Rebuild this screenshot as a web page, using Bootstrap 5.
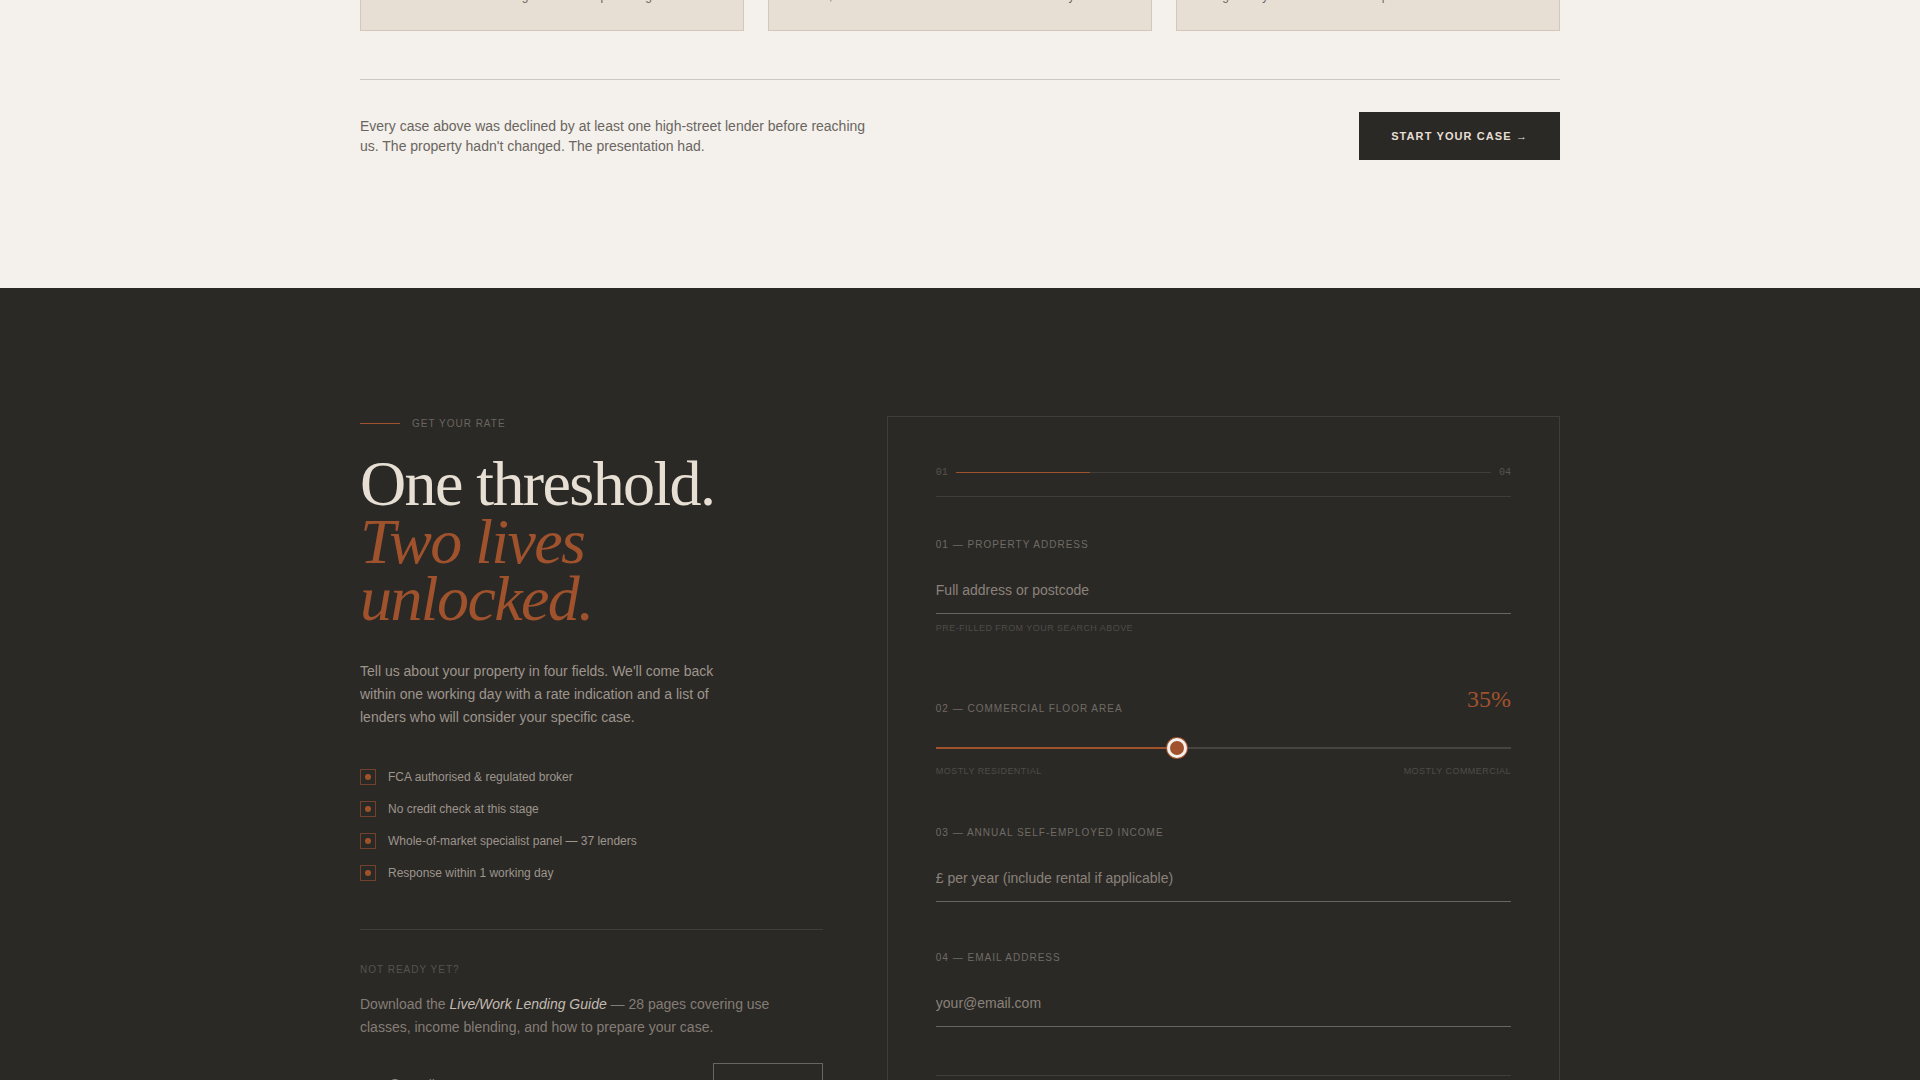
<!DOCTYPE html>
<html lang="en">
<head>
<meta charset="utf-8">
<meta name="viewport" content="width=device-width, initial-scale=1">
<title>Get your rate</title>
<link rel="stylesheet" href="https://cdn.jsdelivr.net/npm/bootstrap@5.3.0/dist/css/bootstrap.min.css">
<style>
:root { --ink: #2a2926; --paper: #f4f1ec; --sand: #e8dfd4; --rust: #a0522d; --stone: #6b655f; --mist: #9e958c; --line: #403e3a; }
body { font-family: "Liberation Sans", sans-serif; background: var(--ink); color: var(--stone); font-size: 14px; line-height: 20px; overflow-x: hidden; }
.page-wrap { max-width: 1200px; }
.cases { background: var(--paper); padding-bottom: 128px; }
.case-strip { gap: 24px; height: 31px; overflow: hidden; }
.case-card { flex: 1 1 0; min-width: 0; background: var(--sand); border: 1px solid #d4c6b8; padding: 28px 28px 24px; }
.case-card p { font-size: 12px; line-height: 20px; white-space: nowrap; }
.case-foot { margin-top: 48px; padding-top: 32px; border-top: 1px solid #ccc7c1; }
.case-foot p { max-width: 520px; }
.btn-case { background: var(--ink); color: var(--sand); border-radius: 0; border: 0; font-size: 11px; font-weight: 700; letter-spacing: 0.1em; line-height: 16px; padding: 16px 32px; }
.btn-case:hover { background: var(--rust); color: var(--paper); }
.rate { padding: 128px 0; }
.rate-grid { display: grid; grid-template-columns: 11fr 16fr; gap: 64px; }
.eyebrow { font-size: 10px; line-height: 15px; letter-spacing: 0.1em; text-transform: uppercase; }
.eyebrow-rule { width: 40px; height: 1px; background: var(--rust); }
.headline { font-family: "Liberation Serif", serif; font-size: 64px; line-height: 0.9; letter-spacing: -0.025em; font-weight: 400; color: var(--sand); margin: 24px 0 32px; }
.headline em { color: var(--rust); }
.intro { max-width: 380px; line-height: 23px; color: var(--mist); }
.trust { margin: 40px 0 48px; font-size: 12px; line-height: 16px; color: var(--mist); }
.tick-frame { width: 16px; height: 16px; border: 1px solid #71412b; }
.tick-dot { width: 6px; height: 6px; border-radius: 50%; background: var(--rust); }
.guide { border-top: 1px solid var(--line); padding-top: 32px; }
.guide-title { color: #57534e; }
.guide-copy { line-height: 23px; color: #857d75; margin: 16px 0 24px; }
.guide-copy em { color: #c4bbb1; }
.line-input { background: transparent; border: 0; border-bottom: 1px solid var(--stone); border-radius: 0; color: var(--sand); font-size: 14px; line-height: 21px; padding: 12px 0; }
.line-input:focus { background: transparent; color: var(--sand); box-shadow: none; border-color: var(--rust); }
.line-input::placeholder { color: #8a827a; }
.btn-guide { border: 1px solid var(--stone); border-radius: 0; color: var(--mist); font-size: 10px; letter-spacing: 0.1em; width: 110px; }
.rate-form { border: 1px solid var(--line); padding: 48px; }
.steps { border-bottom: 1px solid var(--line); padding-bottom: 16px; font: 10px/15px "Liberation Mono", monospace; color: #57534e; }
.steps-track { height: 1px; background: var(--line); }
.steps-fill { height: 1px; background: var(--rust); }
.form-fields { padding: 40px 0 48px; gap: 48px; }
.field-label { font-size: 10px; line-height: 15px; letter-spacing: 0.1em; text-transform: uppercase; color: #716b65; }
.field-hint { font-size: 9px; line-height: 12px; letter-spacing: 0.05em; text-transform: uppercase; color: #504c48; margin-top: 8px; }
.share-value { font-family: "Liberation Serif", serif; font-size: 24px; line-height: 34px; color: var(--rust); }
.share-range { appearance: none; -webkit-appearance: none; display: block; width: 100%; height: 18px; background: transparent; margin: 23px 0 0; }
.share-range::-webkit-slider-runnable-track { height: 2px; background: linear-gradient(90deg, var(--rust) 42%, #474540 42%); }
.share-range::-webkit-slider-thumb { -webkit-appearance: none; width: 20px; height: 20px; margin-top: -9px; border: 3px solid var(--paper); border-radius: 50%; background: var(--rust); box-shadow: 0 0 0 1px var(--rust); }
.form-end { border-top: 1px solid var(--line); padding-top: 32px; }
</style>
</head>
<body>
<section class="cases">
  <div class="page-wrap mx-auto">
    <div class="case-strip d-flex align-items-end">
      <article class="case-card"><p class="mb-0">The lender valued both again after new plan is right</p></article>
      <article class="case-card"><p class="mb-0">Home, studio and store all on one loan from last day</p></article>
      <article class="case-card"><p class="mb-0">Single entry to the home and the press</p></article>
    </div>
    <div class="case-foot d-flex justify-content-between align-items-center">
      <p class="mb-0">Every case above was declined by at least one high-street lender before reaching us. The property hadn't changed. The presentation had.</p>
      <a class="btn btn-case" href="#rate">START YOUR CASE →</a>
    </div>
  </div>
</section>
<section class="rate" id="rate">
  <div class="page-wrap rate-grid mx-auto">
    <div>
      <div class="eyebrow d-flex align-items-center"><span class="eyebrow-rule me-2"></span><span class="ms-1">Get your rate</span></div>
      <h2 class="headline">One threshold.<br><em>Two lives<br>unlocked.</em></h2>
      <p class="intro mb-0">Tell us about your property in four fields. We'll come back within one working day with a rate indication and a list of lenders who will consider your specific case.</p>
      <ul class="trust list-unstyled d-flex flex-column gap-3">
        <li class="d-flex align-items-center"><span class="tick-frame d-flex align-items-center justify-content-center me-2"><span class="tick-dot"></span></span><span class="ms-1">FCA authorised &amp; regulated broker</span></li>
        <li class="d-flex align-items-center"><span class="tick-frame d-flex align-items-center justify-content-center me-2"><span class="tick-dot"></span></span><span class="ms-1">No credit check at this stage</span></li>
        <li class="d-flex align-items-center"><span class="tick-frame d-flex align-items-center justify-content-center me-2"><span class="tick-dot"></span></span><span class="ms-1">Whole-of-market specialist panel — 37 lenders</span></li>
        <li class="d-flex align-items-center"><span class="tick-frame d-flex align-items-center justify-content-center me-2"><span class="tick-dot"></span></span><span class="ms-1">Response within 1 working day</span></li>
      </ul>
      <div class="guide">
        <div class="eyebrow guide-title">Not ready yet?</div>
        <p class="guide-copy">Download the <em>Live/Work Lending Guide</em> — 28 pages covering use classes, income blending, and how to prepare your case.</p>
        <form class="d-flex">
          <input class="form-control line-input" type="email" placeholder="your@email.com" aria-label="Email for the guide">
          <button class="btn btn-guide flex-shrink-0" type="button">SEND</button>
        </form>
      </div>
    </div>
    <form class="rate-form">
      <div class="steps d-flex align-items-center gap-2">
        <span>01</span>
        <div class="steps-track flex-grow-1"><div class="steps-fill w-25"></div></div>
        <span>04</span>
      </div>
      <div class="form-fields d-flex flex-column">
        <div>
          <label class="field-label d-block mb-3" for="address">01 — Property address</label>
          <input class="form-control line-input" id="address" type="text" placeholder="Full address or postcode">
          <div class="field-hint">Pre-filled from your search above</div>
        </div>
        <div>
          <div class="d-flex justify-content-between align-items-end">
            <label class="field-label" for="share">02 — Commercial floor area</label>
            <output class="share-value" for="share">35%</output>
          </div>
          <input class="share-range" id="share" type="range" min="10" max="70" value="35">
          <div class="field-hint d-flex justify-content-between"><span>Mostly residential</span><span>Mostly commercial</span></div>
        </div>
        <div>
          <label class="field-label d-block mb-3" for="income">03 — Annual self-employed income</label>
          <input class="form-control line-input" id="income" type="text" placeholder="£ per year (include rental if applicable)">
        </div>
        <div>
          <label class="field-label d-block mb-3" for="email">04 — Email address</label>
          <input class="form-control line-input" id="email" type="email" placeholder="your@email.com">
        </div>
      </div>
      <div class="form-end"></div>
    </form>
  </div>
</section>
<script src="https://cdn.jsdelivr.net/npm/bootstrap@5.3.0/dist/js/bootstrap.bundle.min.js"></script>
</body>
</html>
